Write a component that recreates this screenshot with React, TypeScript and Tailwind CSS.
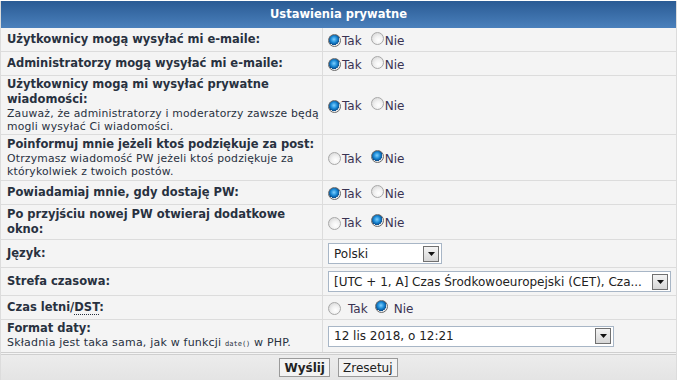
import React from "react";

// phpBB style "Ustawienia prywatne" panel

const font = { fontFamily: '"DejaVu Sans", Verdana, sans-serif' };

function Radio({ checked }: { checked: boolean }) {
  return checked ? (
    <span className="inline-block w-[13px] h-[13px] rounded-full border border-[#6b6b6b] bg-[radial-gradient(circle_at_45%_40%,#7fd0ff_0%,#1b8ad6_35%,#0a4f8f_60%,#e8e8e8_62%,#ffffff_100%)] shrink-0" />
  ) : (
    <span className="inline-block w-[13px] h-[13px] rounded-full border border-[#a8a8a8] bg-[radial-gradient(circle_at_60%_65%,#ffffff_0%,#f2f2f2_40%,#cfcfcf_100%)] shrink-0" />
  );
}

function YesNo({ yes, wide }: { yes: boolean; wide?: boolean }) {
  return (
    <div className="flex items-center text-[12px] text-[#3a3352] pt-[2px]">
      <Radio checked={yes} />
      <span className={wide ? "ml-[7px]" : "ml-[1px]"}>Tak</span>
      <span className={wide ? "ml-[7px]" : "ml-[9px]"}>
        <Radio checked={!yes} />
      </span>
      <span className={wide ? "ml-[6px]" : "ml-[1px]"}>Nie</span>
    </div>
  );
}

function Select({ value, width }: { value: string; width: string }) {
  return (
    <div
      className={`${width} h-[21px] border border-[#a8b6c6] bg-white flex items-center justify-between pl-[5px] pr-[2px] text-[12px] text-[#222]`}
    >
      <span className="truncate">{value}</span>
      <span className="w-[16px] h-[16px] border border-[#707070] bg-[linear-gradient(#f4f4f4,#d6d6d6)] flex items-center justify-center shrink-0 ml-2">
        <svg width="7" height="4" viewBox="0 0 7 4">
          <path d="M0 0h7L3.5 4z" fill="#111" />
        </svg>
      </span>
    </div>
  );
}

function Row({
  h,
  label,
  note,
  children,
}: {
  h: string;
  label: React.ReactNode;
  note?: string[];
  children: React.ReactNode;
}) {
  return (
    <div className={`flex ${h} border-b border-[#dcdcdc] bg-[#f4f4f4]`}>
      <div className="w-[322px] shrink-0 border-r border-[#dcdcdc] px-[6px] flex flex-col justify-center">
        <div className="text-[11.5px] font-bold leading-[15px] text-[#28313f]">{label}</div>
        {note?.map((line) => (
          <div key={line} className="text-[10.8px] tracking-[0.2px] leading-[13px] text-[#28313f] whitespace-nowrap">
            {line}
          </div>
        ))}
      </div>
      <div className="flex-1 flex items-center px-[5px]">{children}</div>
    </div>
  );
}

export default function App() {
  return (
    <div className="w-[680px] h-[380px] bg-white pt-[1px]" style={font}>
      <div className="w-[677px] border-x border-[#dcdcdc]">
        <div className="h-[27px] bg-[linear-gradient(#2a5b94,#4a80bc)] flex items-center justify-center text-white text-[11.5px] font-bold">
          Ustawienia prywatne
        </div>
        <Row h="h-[24px]" label="Użytkownicy mogą wysyłać mi e-maile:">
          <YesNo yes />
        </Row>
        <Row h="h-[24px]" label="Administratorzy mogą wysyłać mi e-maile:">
          <YesNo yes />
        </Row>
        <Row
          h="h-[59px]"
          label="Użytkownicy mogą mi wysyłać prywatne wiadomości:"
          note={["Zauważ, że administratorzy i moderatorzy zawsze będą", "mogli wysyłać Ci wiadomości."]}
        >
          <YesNo yes />
        </Row>
        <Row
          h="h-[46px]"
          label="Poinformuj mnie jeżeli ktoś podziękuje za post:"
          note={["Otrzymasz wiadomość PW jeżeli ktoś podziękuje za", "którykolwiek z twoich postów."]}
        >
          <YesNo yes={false} />
        </Row>
        <Row h="h-[24px]" label="Powiadamiaj mnie, gdy dostaję PW:">
          <YesNo yes />
        </Row>
        <Row h="h-[35px]" label="Po przyjściu nowej PW otwieraj dodatkowe okno:">
          <YesNo yes={false} />
        </Row>
        <Row h="h-[28px]" label="Język:">
          <Select value="Polski" width="w-[114px]" />
        </Row>
        <Row h="h-[28px]" label="Strefa czasowa:">
          <Select value="[UTC + 1, A] Czas Środkowoeuropejski (CET), Cza..." width="w-[343px]" />
        </Row>
        <Row
          h="h-[24px]"
          label={
            <>
              Czas letni/<span className="border-b border-dotted border-[#28313f]">DST</span>:
            </>
          }
        >
          <YesNo yes={false} wide />
        </Row>
        <div className="flex h-[35px] border-b-[3px] border-double border-[#cfcfcf] bg-[#f4f4f4]">
          <div className="w-[322px] shrink-0 border-r border-[#dcdcdc] px-[6px] flex flex-col justify-center text-[#28313f]">
            <div className="text-[11.5px] font-bold leading-[15px]">Format daty:</div>
            <div className="text-[11px] tracking-[0.2px] leading-[13px]">
              Składnia jest taka sama, jak w funkcji{" "}
              <code className="text-[7px] tracking-normal" style={{ fontFamily: '"DejaVu Sans Mono", monospace' }}>
                date()
              </code>{" "}
              w PHP.
            </div>
          </div>
          <div className="flex-1 flex items-center px-[5px]">
            <Select value="12 lis 2018, o 12:21" width="w-[286px]" />
          </div>
        </div>
        <div className="h-[25px] bg-[linear-gradient(#ececec,#e4e4e4)] flex items-center justify-center gap-[8px]">
          <button className="h-[19px] px-[4px] border border-[#9a9a9a] bg-[#f3f3f3] text-[12px] font-bold text-[#222] leading-none">
            Wyślij
          </button>
          <button className="h-[19px] px-[4px] border border-[#9a9a9a] bg-[#f3f3f3] text-[12px] text-[#222] leading-none">
            Zresetuj
          </button>
        </div>
      </div>
    </div>
  );
}
